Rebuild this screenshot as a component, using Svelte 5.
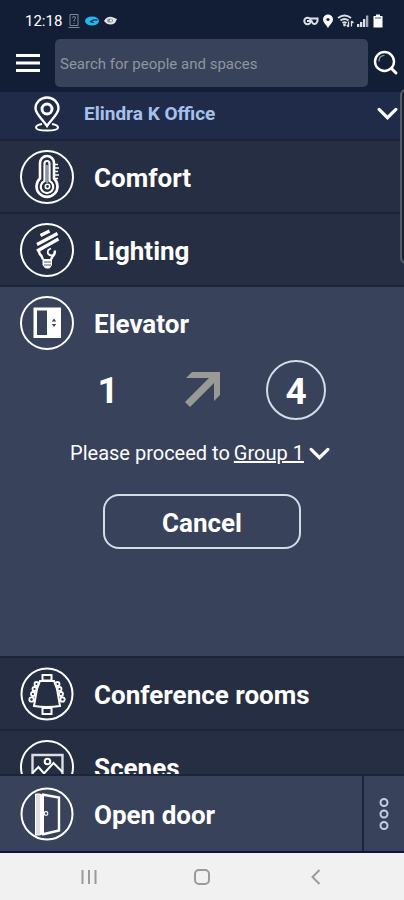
<script lang="ts">
  let search = $state("");
</script>

{#snippet chevron()}
  <svg class="chevron" viewBox="0 0 20 12" aria-hidden="true">
    <path d="M2 2l8 8 8-8" />
  </svg>
{/snippet}

<div class="app">
  <header>
    <div class="status">
      <span class="time">12:18</span>
      <div class="notifications">
        <svg class="wide" viewBox="0 0 13 16">
          <g fill="none" stroke="#7f8794">
            <path d="M2.500 1.500h8v11h-8zM1 14.500h11" />
            <path d="M5 5q0-1.500 1.500-1.500T8 5q0 1-1.500 2v1.500M6.500 10v1" />
          </g>
        </svg>
        <svg class="wide" viewBox="0 0 14 16">
          <ellipse cx="7" cy="8" rx="7" ry="4.500" fill="#26b5ee" />
          <path d="M5 9l3-1.800 4.500-.4M6 9l3 .5" fill="none" stroke="#12304f" stroke-width="1.200" />
        </svg>
        <svg class="wide" viewBox="0 0 14 16">
          <path d="M1 8q3-5 8-4l5 2-2 4q-6 4-11-2z" fill="#e4e6e8" />
          <ellipse cx="7" cy="7.500" rx="3" ry="2" fill="#8c929b" />
          <circle cx="8" cy="7.500" r="1" fill="#fff" />
        </svg>
      </div>
      <div class="indicators">
        <svg width="16" height="16" viewBox="0 0 16 16">
          <g fill="none" stroke="#dde0e4" stroke-width="2">
            <circle cx="4.500" cy="8" r="3.200" />
            <path d="M7 5.500h7.500v2.500q-1 3-3 3t-3-3H4" />
          </g>
        </svg>
        <svg width="12" height="16" viewBox="0 0 12 16">
          <path d="M6 1.500a5 5 0 0 1 5 5c0 3-3 5-5 8.500-2-3.500-5-5.500-5-8.500a5 5 0 0 1 5-5z" fill="#fff" />
          <circle cx="6" cy="6.500" r="1.600" fill="#13203a" />
        </svg>
        <svg width="17" height="16" viewBox="0 0 17 16">
          <g fill="none" stroke="#dde0e4" stroke-width="1.900">
            <path d="M1 5q6.500-5 13 0M3.500 7.500q4-3 8 0M5.500 10q2-1.500 4 0" />
            <path d="M11.500 14V8.500M9.800 12l1.700 2M14.500 8v5.500M14.500 8l2 2" stroke-width="1.300" />
          </g>
          <circle cx="7.500" cy="12" r="1.400" fill="#dde0e4" />
        </svg>
        <svg width="12" height="16" viewBox="0 0 12 16">
          <path d="M0 14v-3h2.300v3zM3 14V9h2.300v5zM6 14V6h2.300v8z" fill="#dde0e4" />
          <path d="M9 14V2.500h2.300V14z" fill="#a4a9b3" />
        </svg>
        <svg width="12" height="16" viewBox="0 0 12 16">
          <path d="M4 1.500h4V3h2.500v11.500h-9V3H4z" fill="#fff" />
          <path d="M3 4h6v2H3z" fill="#a4a9b3" />
        </svg>
      </div>
    </div>

    <form class="search" onsubmit={(e) => e.preventDefault()}>
      <button type="button" class="menu" aria-label="Menu">
        <svg width="24" height="20" viewBox="0 0 24 20">
          <path d="M0 2.500h24M0 10h24M0 17.500h24" stroke="#fff" stroke-width="3" />
        </svg>
      </button>
      <input
        type="text"
        aria-label="Search for people and spaces"
        placeholder="Search for people and spaces"
        bind:value={search}
      />
      <button class="find" aria-label="Search">
        <svg width="26" height="26" viewBox="0 0 26 26">
          <g fill="none" stroke="#fff" stroke-linecap="round">
            <circle cx="11.500" cy="11.500" r="9.500" stroke-width="2.400" />
            <path d="M18.500 18.500l4.500 4.500" stroke-width="3" />
            <path d="M6 11q0-5 5-5.500" stroke="#a5abb6" stroke-width="1.200" />
          </g>
        </svg>
      </button>
    </form>
  </header>

  <button class="location">
    <svg width="26" height="36" viewBox="0 0 26 36">
      <g fill="none" stroke="#fff" stroke-width="2.400">
        <path d="M13 30C10 25 1.500 18 1.500 12.500a11.500 11 0 0 1 23 0C24.500 18 16 25 13 30z" />
        <circle cx="13" cy="13" r="5" stroke-width="3" />
        <path d="M8 28q-6 1-6 3.500 0 3 11 3t11-3Q24 29 18 28" stroke-width="2" />
      </g>
    </svg>
    <span>Elindra K Office</span>
    {@render chevron()}
  </button>

  <main>
    <section>
      <button class="row">
        <svg class="icon" viewBox="0 0 54 54">
          <circle cx="27" cy="27" r="26" />
          <path d="M20 28.500V13a7 7 0 0 1 14 0v15.500a10.500 10.500 0 1 1-14 0z" stroke-width="2.600" />
          <path d="M24.500 31V13.500a2.500 2.500 0 0 1 5 0V31a6.300 6.300 0 1 1-5 0z" stroke-width="2.200" />
          <path d="M27 15v18" stroke="#8d94a3" stroke-width="2" />
          <circle cx="27.500" cy="36.500" r="2.200" stroke-width="1.600" />
          <path d="M34 14.500h4M34 18h5M34 21.500h4M34 25h5M34 28.500h4" stroke-width="1.600" />
        </svg>
        <span>Comfort</span>
      </button>
    </section>

    <section>
      <button class="row">
        <svg class="icon" viewBox="0 0 54 54">
          <circle cx="27" cy="27" r="26" />
          <path d="M20.500 12.500l9-4.500M17 21.500L37.500 10.500M17 28l21.500-12" stroke-width="3.200" />
          <path d="M19 28q0 3 2.500 5l1.500 3.500M35 27.500q0 4-2.500 6L31 36.500" stroke-width="2.400" />
          <path d="M31 25.500q-4 1-3 5 1.500 3 5.500 1.500" stroke-width="1.800" />
          <path d="M23 36.500h8.500v5.500l-2 3h-4l-2.500-3z" fill="#fff" stroke-width="1" />
          <path d="M24 39h7M24 42h7" stroke="#252e42" stroke-width="0.800" />
        </svg>
        <span>Lighting</span>
      </button>
    </section>

    <section class="open">
      <button class="row">
        <svg class="icon" viewBox="0 0 54 54">
          <circle cx="27" cy="27" r="26" />
          <path d="M13.500 11.500H41V42H13.500z" fill="#fff" stroke="none" />
          <path d="M17 14.500h10V39H17z" fill="#38425a" stroke="none" />
          <path d="M31.800 25.500l2.200-3 2.200 3zM31.800 28l2.200 3 2.200-3z" fill="#38425a" stroke="none" />
        </svg>
        <span>Elevator</span>
      </button>

      <div class="trip">
        <span class="floor">1</span>
        <svg width="36" height="36" viewBox="0 0 36 36">
          <path d="M8 0h28v23l-6 6V11L6 35l-5-5L25 6H2z" fill="#999996" />
        </svg>
        <span class="floor target">4</span>
      </div>

      <p>
        Please proceed to
        <button class="group"><span>Group 1</span>{@render chevron()}</button>
      </p>

      <button class="cancel">Cancel</button>
    </section>

    <section>
      <button class="row">
        <svg class="icon" viewBox="0 0 54 54">
          <circle cx="27" cy="27" r="25.500" />
          <g stroke-width="2">
            <path d="M20 14h14l3 8 3 17q-13 2-26 0l3-17z" />
            <path d="M22.500 8h9v5.500h-9zM22.500 41h9v6h-9z" />
          </g>
          <g stroke-width="1.800">
            <circle cx="16.500" cy="17" r="2" />
            <circle cx="14.500" cy="22" r="2" />
            <circle cx="13" cy="27" r="2" />
            <circle cx="11.500" cy="32.500" r="2.200" />
            <circle cx="37.500" cy="17" r="2" />
            <circle cx="39.500" cy="22" r="2" />
            <circle cx="41" cy="27" r="2" />
            <circle cx="42.500" cy="32.500" r="2.200" />
          </g>
        </svg>
        <span>Conference rooms</span>
      </button>
    </section>

    <section>
      <button class="row">
        <svg class="icon" viewBox="0 0 54 54">
          <circle cx="27" cy="27" r="26" />
          <path d="M12.500 15h30v25h-30z" stroke="#dcdee2" stroke-width="2.400" />
          <circle cx="27.500" cy="21.500" r="2.800" />
          <path d="M12.500 33l6-6 5.500 6.500L33.500 23l9 9" />
        </svg>
        <span>Scenes</span>
      </button>
    </section>
  </main>

  <div class="dock">
    <button class="row">
      <svg class="icon" viewBox="0 0 54 54">
        <circle cx="27" cy="27" r="25.500" />
        <path d="M15.500 7h5v41h-5z" fill="#dcdee2" stroke="#fff" stroke-width="1" />
        <path d="M21.500 7.500l2 .5v39l-2 .5z" fill="#fff" stroke-width="1" />
        <path d="M22 7.500l17 3V43.500l-17 4" stroke-width="2.400" />
        <circle cx="26" cy="26.500" r="1.800" stroke-width="1.200" />
      </svg>
      <span>Open door</span>
    </button>
    <button class="more" aria-label="More options">
      <svg width="12" height="34" viewBox="0 0 12 34">
        <g fill="none" stroke="#c3cfe2" stroke-width="2">
          <circle cx="6" cy="5.500" r="3.500" />
          <circle cx="6" cy="17" r="3.500" />
          <circle cx="6" cy="28.500" r="3.500" />
        </g>
      </svg>
    </button>
  </div>

  <nav>
    <button aria-label="Recent apps">
      <svg width="18" height="18" viewBox="0 0 18 18">
        <path d="M2.500 2v14M9 2v14M15.500 2v14" />
      </svg>
    </button>
    <button aria-label="Home">
      <svg width="18" height="18" viewBox="0 0 18 18">
        <rect x="2" y="2" width="14" height="14" rx="4" />
      </svg>
    </button>
    <button aria-label="Back">
      <svg width="18" height="18" viewBox="0 0 18 18">
        <path d="M13.500 2L6.500 9l7 7" />
      </svg>
    </button>
  </nav>

  <!-- Handle of the system edge panel -->
  <div class="edge-panel"></div>
</div>

<style>
  :global(body) {
    margin: 0;
    background: #252e42;
  }

  .app {
    position: relative;
    display: flex;
    flex-direction: column;
    height: 100vh;
    overflow: hidden;
    font-family: Roboto, sans-serif;
    color: #fff;
    background: #252e42;
  }

  button {
    margin: 0;
    padding: 0;
    border: 0;
    background: none;
    color: inherit;
    font: inherit;
    text-align: left;
    cursor: pointer;
  }

  svg {
    display: block;
    flex: none;
  }

  header {
    flex: none;
    padding-bottom: 5px;
    background: #121e36;
  }

  .status {
    display: flex;
    align-items: center;
    gap: 5px;
    height: 39px;
    padding: 2px 20px 0 25px;
    box-sizing: border-box;
  }

  .time {
    font-size: 15px;
  }

  .notifications,
  .indicators {
    display: flex;
    align-items: center;
    gap: 4px;
  }

  .indicators {
    margin-left: auto;
    gap: 3px;
  }

  .wide {
    width: 14px;
    height: 16px;
  }

  .search {
    display: flex;
    align-items: center;
    height: 48px;
  }

  .menu {
    padding: 0 15px 0 16px;
  }

  .find {
    padding: 0 5px;
  }

  input {
    flex: 1;
    min-width: 0;
    height: 48px;
    padding: 2px 5px 0;
    box-sizing: border-box;
    border: 0;
    border-radius: 5px;
    background: #38425a;
    color: #fff;
    font-family: inherit;
    font-size: 15px;
  }

  input::placeholder {
    color: #8f95a1;
    opacity: 1;
  }

  .location {
    display: flex;
    flex: none;
    align-items: center;
    height: 49px;
    padding: 0 6px 4px 34px;
    box-sizing: border-box;
    border-bottom: 2px solid #1a2338;
    background: #202b49;
    color: #a6c1ec;
    font-size: 19px;
    font-weight: 700;
  }

  .location span {
    flex: 1;
    padding-left: 24px;
  }

  .chevron {
    width: 21px;
    height: 13px;
    fill: none;
    stroke: #fff;
    stroke-width: 3;
    stroke-linecap: round;
  }

  main {
    flex: 1;
    min-height: 0;
    overflow: hidden;
  }

  section {
    border-bottom: 2px solid #1b2539;
  }

  .row {
    display: flex;
    align-items: center;
    gap: 20px;
    width: 100%;
    height: 71px;
    padding-left: 20px;
    font-size: 26px;
    font-weight: 700;
  }

  .row span {
    padding-top: 2px;
  }

  .icon {
    width: 54px;
    height: 54px;
    fill: none;
    stroke: #fff;
    stroke-width: 2;
  }

  .open {
    display: flex;
    flex-direction: column;
    align-items: center;
    height: 369px;
    background: #38425a;
  }

  .trip {
    display: grid;
    grid-template-columns: repeat(3, 94px);
    align-items: center;
    justify-items: center;
    padding-top: 2px;
  }

  .floor {
    padding-top: 2px;
    font-size: 37px;
    font-weight: 700;
    line-height: 58px;
  }

  .target {
    width: 60px;
    height: 60px;
    box-sizing: border-box;
    border: 2px solid #d5dce8;
    border-radius: 50%;
    line-height: 56px;
    text-align: center;
  }

  p {
    display: flex;
    gap: 4px;
    margin: 21px 0 29px;
    padding-right: 4px;
    font-size: 20px;
    line-height: 24px;
  }

  .group {
    display: flex;
    align-items: center;
    gap: 5px;
  }

  .group span {
    text-decoration: underline;
  }

  .cancel {
    width: 198px;
    height: 55px;
    padding-top: 2px;
    border: 2px solid #d5dce8;
    border-radius: 16px;
    font-size: 26px;
    font-weight: 700;
    text-align: center;
  }

  .dock {
    display: flex;
    flex: none;
    height: 79px;
    box-sizing: border-box;
    border-top: 2px solid #1b2539;
    border-bottom: 2px solid #0e1540;
    background: #38425a;
  }

  .dock .row {
    flex: 1;
    height: auto;
  }

  .more {
    display: flex;
    align-items: center;
    justify-content: center;
    width: 42px;
    border-left: 2px solid #1b2539;
  }

  nav {
    display: flex;
    flex: none;
    align-items: center;
    justify-content: center;
    gap: 95px;
    height: 47px;
    background: #f1f1f1;
  }

  nav svg {
    fill: none;
    stroke: #9a9a9a;
    stroke-width: 2;
  }

  .edge-panel {
    position: absolute;
    top: 89px;
    right: -8px;
    width: 12px;
    height: 175px;
    box-sizing: border-box;
    border: 2px solid #555c6b;
    border-radius: 6px;
    background: #1b2333;
  }
</style>
